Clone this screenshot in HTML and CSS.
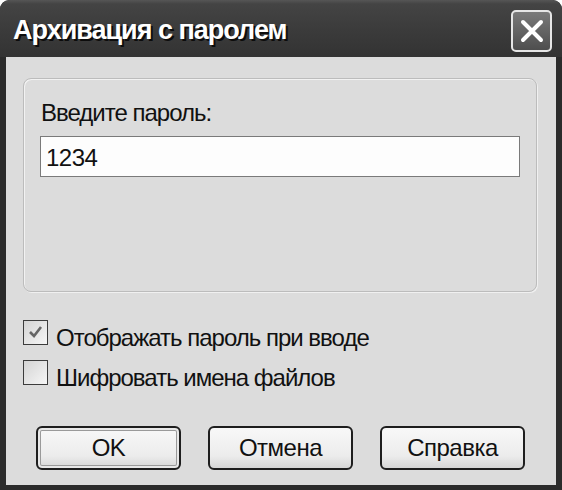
FILE: index.html
```html
<!DOCTYPE html>
<html lang="ru">
<head>
<meta charset="utf-8">
<link rel="stylesheet" href="styles.css">
</head>
<body>
<div class="window">
  <div class="titlebar">
    <span class="title">Архивация с паролем</span>
    <div class="close">
      <svg width="26" height="26" viewBox="0 0 26 26"><path d="M4 4 L22 22 M22 4 L4 22" stroke="#fff" stroke-width="4" stroke-linecap="round"/></svg>
    </div>
  </div>
  <div class="content">
    <div class="group">
      <div class="label">Введите пароль:</div>
      <div class="input">1234</div>
    </div>
    <div class="checks">
      <div class="check-row">
        <span class="box">
          <svg width="17" height="17" viewBox="0 0 17 17"><path d="M3 8 L7 12 L14 3" fill="none" stroke="#666" stroke-width="2.6"/></svg>
        </span>
        <span class="check-label">Отображать пароль при вводе</span>
      </div>
      <div class="check-row">
        <span class="box"></span>
        <span class="check-label">Шифровать имена файлов</span>
      </div>
    </div>
    <div class="buttons">
      <div class="btn default"><span>OK</span></div>
      <div class="btn"><span>Отмена</span></div>
      <div class="btn"><span>Справка</span></div>
    </div>
  </div>
</div>
</body>
</html>
```
FILE: styles.css
```css
*, *::before, *::after {
  box-sizing: border-box;
}
html, body {
  margin: 0;
  padding: 0;
  background: #ffffff;
}
.window {
  width: 562px;
  height: 490px;
  background: #2b2b2b;
  border-radius: 9px 9px 0 0;
  display: flex;
  flex-direction: column;
  font-family: "Liberation Sans", Arial, sans-serif;
  color: #111;
  overflow: hidden;
}
.titlebar {
  height: 57px;
  flex: none;
  display: flex;
  align-items: center;
  justify-content: space-between;
  padding: 0 10px 0 13px;
  background: linear-gradient(#565656 0, #444 4px, #3b3b3b 30px, #333 57px);
  border-radius: 9px 9px 0 0;
}
.title {
  font-size: 27px;
  font-weight: bold;
  letter-spacing: -1px;
  color: #fff;
  text-shadow: 2px 2px 0 #0c0c0c;
  padding-top: 4px;
}
.close {
  width: 41px;
  height: 42px;
  margin-top: 5px;
  border: 2px solid #e6e6e6;
  border-radius: 5px;
  background: linear-gradient(#7a7a7a, #4e4e4e);
  display: flex;
  align-items: center;
  justify-content: center;
}
.content {
  flex: 1;
  margin: 0 6px 5px 6px;
  background: #dcdcdc;
  padding: 21px 19px 0 17px;
  display: flex;
  flex-direction: column;
}
.group {
  height: 214px;
  flex: none;
  border: 1px solid #bcbcbc;
  border-radius: 8px;
  box-shadow: inset 1px 1px 0 #f2f2f2, 1px 1px 0 #f0f0f0;
  padding: 19px 16px 0 16px;
  display: flex;
  flex-direction: column;
}
.label {
  font-size: 24px;
  letter-spacing: -1px;
  line-height: 30px;
  padding-left: 1px;
}
.input {
  margin-top: 8px;
  height: 41px;
  width: 480px;
  background: #fdfdfd;
  border: 1px solid #7a7a7a;
  font-size: 24px;
  letter-spacing: -0.5px;
  line-height: 39px;
  padding: 1px 0 0 5px;
}
.checks {
  margin-top: 28px;
  display: flex;
  flex-direction: column;
  gap: 7px;
}
.check-row {
  display: flex;
  align-items: flex-start;
  gap: 8px;
}
.box {
  width: 25px;
  height: 25px;
  flex: none;
  border: 1px solid #3c3c3c;
  background: linear-gradient(135deg, #d4d4d4, #f6f6f6);
  display: flex;
  align-items: center;
  justify-content: center;
}
.check-label {
  font-size: 24px;
  letter-spacing: -1px;
  line-height: 30px;
  margin-top: 3px;
}
.buttons {
  margin-top: 33px;
  margin-left: 13px;
  display: flex;
  gap: 27px;
}
.btn {
  width: 145px;
  height: 44px;
  border: 2px solid #1e1e1e;
  border-radius: 6px;
  background: linear-gradient(#f8f8f8, #ececec 70%, #d6d6d6);
  display: flex;
  align-items: center;
  justify-content: center;
  font-size: 24px;
  letter-spacing: -0.5px;
}
.btn.default {
  box-shadow: inset 0 0 0 2px #e8e8e8, inset 0 0 0 3px #9a9a9a;
}
```
